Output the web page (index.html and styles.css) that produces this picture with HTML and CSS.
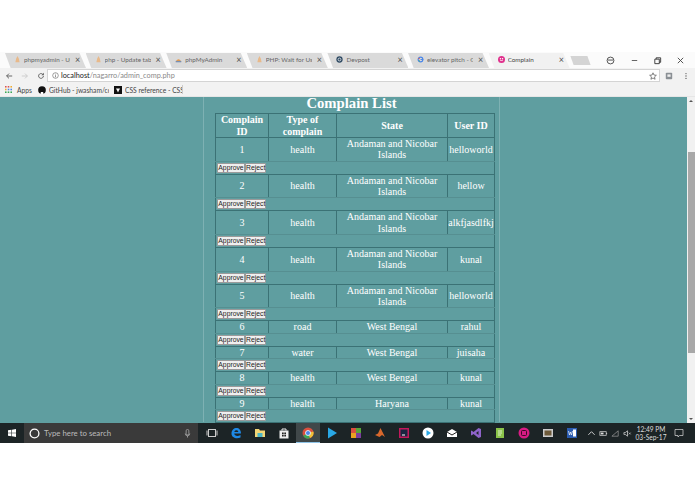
FILE: index.html
```html
<!DOCTYPE html>
<html lang="en">
<head>
<meta charset="utf-8">
<title>Complain</title>
<link rel="stylesheet" href="styles.css">
</head>
<body>
<div class="screen">
  <div class="tabstrip">
    <div class="tab"><svg class="fav" viewBox="0 0 10 10"><path d="M5 0l2 4 1 5H2l1-5z" fill="#e8b98a"/></svg><span class="tabtext">phpmyadmin - Up</span><span class="x">×</span></div>
    <div class="tab"><svg class="fav" viewBox="0 0 10 10"><path d="M5 0l2 4 1 5H2l1-5z" fill="#e8b98a"/></svg><span class="tabtext">php - Update tabl</span><span class="x">×</span></div>
    <div class="tab"><svg class="fav" viewBox="0 0 10 10"><path d="M1 8q4-7 8 0z" fill="#e89a4a"/><rect x="1" y="7" width="8" height="2" fill="#7a8fb0"/></svg><span class="tabtext">phpMyAdmin</span><span class="x">×</span></div>
    <div class="tab"><svg class="fav" viewBox="0 0 10 10"><path d="M5 0l2 4 1 5H2l1-5z" fill="#e8b98a"/></svg><span class="tabtext">PHP: Wait for User</span><span class="x">×</span></div>
    <div class="tab"><svg class="fav" viewBox="0 0 10 10"><circle cx="5" cy="5" r="4.5" fill="#2f4a63"/><circle cx="5" cy="5" r="2" fill="none" stroke="#fff"/></svg><span class="tabtext">Devpost</span><span class="x">×</span></div>
    <div class="tab"><svg class="fav" viewBox="0 0 10 10"><circle cx="5" cy="5" r="3.4" fill="none" stroke="#4a86e8" stroke-width="1.6"/><path d="M5 5h4" stroke="#4a86e8" stroke-width="1.4"/><path d="M2 3l2 1" stroke="#e0483a" stroke-width="1.4"/><path d="M2.500 7.500l1.500-1" stroke="#3aa757" stroke-width="1.4"/></svg><span class="tabtext">elevator pitch - G</span><span class="x">×</span></div>
    <div class="tab active"><svg class="fav" viewBox="0 0 10 10"><circle cx="5" cy="5" r="5" fill="#e0308c"/><circle cx="3.500" cy="4" r="1" fill="#fff"/><circle cx="6.500" cy="4" r="1" fill="#fff"/><path d="M3 6.500h4" stroke="#fff"/></svg><span class="tabtext">Complain</span><span class="x">×</span></div>
    <div class="newtab"></div>
    <div class="winbtns">
      <svg class="winicon profile" viewBox="0 0 10 10"><circle cx="5" cy="5" r="3.800" fill="none" stroke="#444"/><path d="M2 4.500h6" stroke="#444"/></svg>
      <svg class="winicon" viewBox="0 0 10 10"><path d="M2 5h6" stroke="#555"/></svg>
      <svg class="winicon" viewBox="0 0 10 10"><path d="M2 3.500h5v5H2zM3.500 3.500V2h5v5H7" fill="none" stroke="#333"/></svg>
      <svg class="winicon" viewBox="0 0 10 10"><path d="M2 2l6 6M8 2l-6 6" stroke="#444"/></svg>
    </div>
  </div>

  <div class="toolbar">
    <svg class="tool" viewBox="0 0 10 10"><path d="M9 5H2M5 2L2 5l3 3" fill="none" stroke="#555" stroke-width="1.100"/></svg>
    <svg class="tool" viewBox="0 0 10 10"><path d="M1 5h7M5 2l3 3-3 3" fill="none" stroke="#c8c8c8" stroke-width="1.100"/></svg>
    <svg class="tool" viewBox="0 0 10 10"><path d="M8 5a3 3 0 1 1-1-2.300" fill="none" stroke="#555" stroke-width="1.100"/><path d="M8.500 1v3h-3z" fill="#555"/></svg>
    <div class="omnibox">
      <svg class="info" viewBox="0 0 10 10"><circle cx="5" cy="5" r="4" fill="none" stroke="#555" stroke-width=".8"/><path d="M5 4.500v3M5 2.500v1" stroke="#555" stroke-width=".9"/></svg>
      <span class="host">localhost</span><span class="path">/nagarro/admin_comp.php</span>
      <svg class="star" viewBox="0 0 10 10"><path d="M5 1l1.200 2.800 3 .3-2.300 2 .7 3L5 7.500 2.400 9.100l.7-3-2.300-2 3-.3z" fill="none" stroke="#444" stroke-width=".8"/></svg>
    </div>
    <svg class="ext" viewBox="0 0 10 10"><rect x="1" y="1" width="8" height="8" rx="1" fill="#8a8f94"/><rect x="3" y="3" width="4" height="3" fill="#eee"/></svg>
    <svg class="menu" viewBox="0 0 10 10"><circle cx="5" cy="2" r=".8" fill="#555"/><circle cx="5" cy="5" r=".8" fill="#555"/><circle cx="5" cy="8" r=".8" fill="#555"/></svg>
  </div>

  <div class="bookmarks">
    <svg class="appsgrid" viewBox="0 0 9 9"><g fill="#d9534f"><rect width="2" height="2"/><rect x="3.500" width="2" height="2"/></g><g fill="#f0ad2e"><rect x="7" width="2" height="2"/><rect y="3.500" width="2" height="2"/></g><g fill="#4a86e8"><rect x="3.500" y="3.500" width="2" height="2"/><rect x="7" y="3.500" width="2" height="2"/></g><g fill="#3aa757"><rect y="7" width="2" height="2"/><rect x="3.500" y="7" width="2" height="2"/><rect x="7" y="7" width="2" height="2"/></g></svg>
    <span class="bm apps">Apps</span>
    <svg class="bmicon" viewBox="0 0 10 10"><circle cx="5" cy="5" r="4.800" fill="#111"/><path d="M3.500 10V7.500h3V10z" fill="#fff"/></svg>
    <span class="bm github">GitHub - jwasham/cc</span>
    <svg class="bmicon" viewBox="0 0 10 10"><rect width="10" height="10" fill="#111"/><path d="M2.500 3h5L6 6 5 8 4 6z" fill="#fff"/></svg>
    <span class="bm css">CSS reference - CSS</span>
    <span class="bmsep"></span>
  </div>

  <div class="page">
    <main class="viewport">
      <div class="content">
        <h1 class="title">Complain List</h1>
        <table class="list">
          <colgroup><col class="c1"><col class="c2"><col class="c3"><col class="c4"></colgroup>
          <thead>
            <tr class="head"><th>Complain ID</th><th>Type of complain</th><th>State</th><th>User ID</th></tr>
          </thead>
          <tbody>
            <tr class="tall"><td>1</td><td>health</td><td>Andaman and Nicobar Islands</td><td>helloworld</td></tr>
            <tr class="act"><td colspan="4"><button>Approve</button><button>Reject</button></td></tr>
            <tr class="tall"><td>2</td><td>health</td><td>Andaman and Nicobar Islands</td><td>hellow</td></tr>
            <tr class="act"><td colspan="4"><button>Approve</button><button>Reject</button></td></tr>
            <tr class="tall"><td>3</td><td>health</td><td>Andaman and Nicobar Islands</td><td>alkfjasdlfkj</td></tr>
            <tr class="act"><td colspan="4"><button>Approve</button><button>Reject</button></td></tr>
            <tr class="tall"><td>4</td><td>health</td><td>Andaman and Nicobar Islands</td><td>kunal</td></tr>
            <tr class="act"><td colspan="4"><button>Approve</button><button>Reject</button></td></tr>
            <tr class="tall"><td>5</td><td>health</td><td>Andaman and Nicobar Islands</td><td>helloworld</td></tr>
            <tr class="act"><td colspan="4"><button>Approve</button><button>Reject</button></td></tr>
            <tr class="short"><td>6</td><td>road</td><td>West Bengal</td><td>rahul</td></tr>
            <tr class="act"><td colspan="4"><button>Approve</button><button>Reject</button></td></tr>
            <tr class="short"><td>7</td><td>water</td><td>West Bengal</td><td>juisaha</td></tr>
            <tr class="act"><td colspan="4"><button>Approve</button><button>Reject</button></td></tr>
            <tr class="short"><td>8</td><td>health</td><td>West Bengal</td><td>kunal</td></tr>
            <tr class="act"><td colspan="4"><button>Approve</button><button>Reject</button></td></tr>
            <tr class="short"><td>9</td><td>health</td><td>Haryana</td><td>kunal</td></tr>
            <tr class="act"><td colspan="4"><button>Approve</button><button>Reject</button></td></tr>
          </tbody>
        </table>
      </div>
    </main>
    <div class="scrollbar">
      <svg class="arrow" viewBox="0 0 8 8"><path d="M2 5l2-2 2 2z" fill="#555"/></svg>
      <div class="track"><div class="thumb"></div></div>
      <svg class="arrow" viewBox="0 0 8 8"><path d="M2 3l2 2 2-2z" fill="#555"/></svg>
    </div>
  </div>

  <div class="taskbar">
    <svg class="winlogo" viewBox="0 0 10 10"><path d="M0 1.500l4.300-.6v3.800H0zM5 .8L10 0v4.700H5zM0 5.300h4.300v3.800L0 8.500zM5 5.300h5V10l-5-.8z" fill="#fff"/></svg>
    <div class="search">
      <svg class="cortana" viewBox="0 0 12 12"><circle cx="6" cy="6" r="4.800" fill="none" stroke="#fff" stroke-width="1.400"/></svg>
      <span class="searchtext">Type here to search</span>
      <svg class="mic" viewBox="0 0 10 10"><rect x="3.500" y=".5" width="3" height="6" rx="1.500" fill="none" stroke="#aaa" stroke-width=".9"/><path d="M2.500 5a2.500 2.500 0 0 0 5 0M5 7.500v2" fill="none" stroke="#aaa" stroke-width=".9"/></svg>
    </div>
    <div class="apps-row">
      <span class="slot"><svg viewBox="0 0 12 12"><rect x="2.500" y="2.500" width="7" height="7" fill="none" stroke="#ccc"/><path d="M1 3.500v5M11 3.500v5" stroke="#ccc"/></svg></span>
      <span class="slot"><svg viewBox="0 0 12 12"><path d="M1.500 6.500C1.500 3 4 1 6.500 1s4.500 2 4.500 5.500H4.200c.2 2.800 4 3 6.300 1.500v2.500c-3.500 1.700-9 .6-9-4z" fill="#1e88e5"/><path d="M4.300 5h4c0-2.300-3.600-2.300-4 0z" fill="#1c2426"/></svg></span>
      <span class="slot"><svg viewBox="0 0 12 12"><path d="M1 2h4l1 1.500h5V10H1z" fill="#f3d675"/><rect x="3.500" y="6" width="5" height="4" fill="#4db6c6"/></svg></span>
      <span class="slot"><svg viewBox="0 0 12 12"><rect x="1.500" y="3.500" width="9" height="8" fill="#eee"/><path d="M4 3.500V2h4v1.500" fill="none" stroke="#eee"/><rect x="4" y="5.500" width="1.700" height="1.700" fill="#222"/><rect x="6.300" y="5.500" width="1.700" height="1.700" fill="#222"/><rect x="4" y="7.800" width="1.700" height="1.700" fill="#222"/><rect x="6.300" y="7.800" width="1.700" height="1.700" fill="#222"/></svg></span>
      <span class="slot on"><svg viewBox="0 0 12 12"><circle cx="6" cy="6" r="5.500" fill="#d9503f"/><path d="M6 6L1.200 8.800A5.500 5.500 0 0 0 8 11.100z" fill="#3aa757"/><path d="M6 6l2 5.100A5.500 5.500 0 0 0 11.400 4.500z" fill="#f2c037"/><circle cx="6" cy="6" r="2.500" fill="#4a86e8" stroke="#fff" stroke-width=".8"/></svg></span>
      <span class="slot"><svg viewBox="0 0 12 12"><path d="M2 .5L11 6l-9 5.500z" fill="#29a8e6"/></svg></span>
      <span class="slot"><svg viewBox="0 0 12 12"><rect x="1" y="1" width="5" height="5" fill="#d9503f"/><rect x="6" y="1" width="5" height="5" fill="#57a639"/><rect x="1" y="6" width="5" height="5" fill="#e8a320"/><rect x="6" y="6" width="5" height="5" fill="#7a3f9d"/></svg></span>
      <span class="slot"><svg viewBox="0 0 12 12"><path d="M1 8l3-1.500L6.500 1 11 10 8 8 5.500 10z" fill="#d9682c"/></svg></span>
      <span class="slot"><svg viewBox="0 0 12 12"><rect x="1" y="1" width="10" height="10" fill="#c2185b"/><rect x="2.500" y="2.500" width="7" height="7" fill="#1a2540"/><path d="M4 8h3" stroke="#fff"/></svg></span>
      <span class="slot"><svg viewBox="0 0 12 12"><circle cx="6" cy="6" r="5.500" fill="#fff"/><path d="M4.500 3L9 6l-4.500 3z" fill="#29a8e6"/></svg></span>
      <span class="slot"><svg viewBox="0 0 12 12"><path d="M1 5l5-3 5 3v5H1z" fill="#fff"/><path d="M1 5l5 3 5-3" fill="none" stroke="#222"/></svg></span>
      <span class="slot"><svg viewBox="0 0 12 12"><path d="M8.500 1L11 2v8l-2.500 1L3.500 7 1.500 8.500 1 8V4l.5-.5L3.500 5z" fill="#8e63c9"/><path d="M8.500 4v4L6 6z" fill="#1c2426"/></svg></span>
      <span class="slot"><svg viewBox="0 0 12 12"><rect x="2" y="1" width="8" height="10" fill="#8bc34a"/><path d="M4 4h4M4 6h4M4 8h3" stroke="#fff" stroke-width=".7"/></svg></span>
      <span class="slot"><svg viewBox="0 0 12 12"><circle cx="6" cy="6" r="5.500" fill="#d81b84"/><rect x="3.500" y="3.500" width="5" height="5" rx="1" fill="none" stroke="#3a0b26"/></svg></span>
      <span class="slot"><svg viewBox="0 0 12 12"><rect x="1" y="2" width="10" height="8" fill="#ccc"/><rect x="2.500" y="3.500" width="7" height="5" fill="#6d5a3a"/></svg></span>
      <span class="slot"><svg viewBox="0 0 12 12"><rect x="1" y="1" width="10" height="10" fill="#2b5cb0"/><rect x="7" y="2.500" width="3" height="7" fill="#fff"/><path d="M2.500 4l1 4 1-3 1 3 1-4" fill="none" stroke="#fff" stroke-width=".7"/></svg></span>
    </div>
    <div class="tray">
      <svg viewBox="0 0 10 10"><path d="M1.500 6.500L5 3l3.500 3.500" fill="none" stroke="#ddd"/></svg>
      <svg viewBox="0 0 10 10"><rect x="1" y="3" width="7" height="4" fill="none" stroke="#ddd" stroke-width=".8"/><rect x="2" y="4" width="3" height="2" fill="#ddd"/><path d="M8.500 4.500v1" stroke="#ddd"/></svg>
      <svg viewBox="0 0 10 10"><path d="M1 8L8 2v6z" fill="none" stroke="#999" stroke-width=".8"/></svg>
      <svg viewBox="0 0 10 10"><path d="M1 4h1.500L5 2v6L2.500 6H1z" fill="none" stroke="#ddd" stroke-width=".8"/><path d="M6.500 4l2 2M8.500 4l-2 2" stroke="#ddd" stroke-width=".7"/></svg>
    </div>
    <div class="clock"><span>12:49 PM</span><span>03-Sep-17</span></div>
    <svg class="notif" viewBox="0 0 10 10"><path d="M1 1.500h8v6H5.500L4 9V7.500H1z" fill="none" stroke="#ddd" stroke-width=".7"/></svg>
  </div>
</div>
</body>
</html>
```
FILE: styles.css
```css
* { box-sizing: border-box; }
html, body { margin: 0; padding: 0; background: #fff; }
body { overflow: hidden; }
.screen {
  width: 695px;
  height: 494px;
  padding: 52px 0 51px;
  display: flex;
  flex-direction: column;
  font-family: Lato, "Liberation Sans", sans-serif;
}

/* tab strip */
.tabstrip { height: 16px; display: flex; align-items: flex-end; padding-left: 5px; background: #fbfbfb; flex: none; }
.tab {
  width: 81px;
  height: 15px;
  margin-right: -.4px;
  padding: 0 5px 2px 9px;
  display: flex;
  align-items: center;
  gap: 3px;
  background: #dadada;
  clip-path: polygon(0 0, 92% 0, 100% 100%, 7% 100%);
  color: #666;
  font-size: 6.300px;
  overflow: hidden;
  white-space: nowrap;
}
.tab.active { background: #f1f1f1; color: #444; }
.fav { width: 7px; height: 7px; flex: none; }
.tabtext { width: 46px; flex: none; overflow: hidden; }
.x { margin-left: auto; flex: none; width: 6px; font-size: 9px; color: #555; line-height: 1; }
.newtab { width: 17px; height: 9px; margin: 0 0 3px 3px; background: #d4d4d4; transform: skewX(20deg); flex: none; }
.winbtns { margin-left: 17px; display: flex; align-items: center; gap: 14px; align-self: center; }
.winicon { width: 9px; height: 9px; }
.winicon.profile { margin-right: 1px; }

/* toolbar */
.toolbar { height: 15px; background: #f2f2f2; display: flex; align-items: center; padding-left: 5px; flex: none; }
.tool { width: 8px; height: 8px; margin-right: 8px; flex: none; }
.omnibox {
  width: 613px;
  height: 13px;
  margin-left: -6px;
  background: #fff;
  border: 1px solid #d4d4d4;
  display: flex;
  align-items: center;
  padding: 0 2px 0 4px;
  font-size: 7.300px;
  flex: none;
}
.info { width: 7px; height: 7px; margin-right: 2px; }
.host { color: #222; }
.path { color: #8a8a8a; flex: 1; }
.star { width: 8px; height: 8px; }
.ext { width: 8px; height: 8px; margin-left: 5px; flex: none; }
.menu { width: 8px; height: 8px; margin-left: 9px; flex: none; }

/* bookmarks */
.bookmarks { height: 14px; background: #f2f2f2; display: flex; align-items: center; padding-left: 5px; font-size: 6.700px; color: #444; flex: none; border-bottom: 1px solid #e6e6e6; }
.appsgrid { width: 7px; height: 7px; margin-right: 5px; flex: none; }
.bm { white-space: nowrap; }
.apps { width: 16px; }
.bmicon { width: 8px; height: 8px; margin: 0 3px 0 5px; flex: none; }
.github { width: 60px; overflow: hidden; }
.css { width: 57px; overflow: hidden; }
.bmsep { width: 1px; height: 9px; background: #ccc; }

/* page */
.page { flex: 1; display: flex; min-height: 0; background: #5f9ea0; }
.viewport { flex: 1; overflow: hidden; padding-left: 203px; }
.content {
  width: 297px;
  height: 100%;
  border-left: 1px solid #7eb1b3;
  border-right: 1px solid #7eb1b3;
  padding-left: 11px;
  color: #fff;
  font-family: "Liberation Serif", serif;
}
.title { margin: -1px 0 0 -11px; height: 17px; width: 295px; text-align: center; font-size: 14.700px; line-height: 15px; font-weight: bold; }
.list { width: 279px; table-layout: fixed; border-collapse: collapse; border: 1px solid #3b7275; font-size: 10px; line-height: 11.300px; }
.c1 { width: 53px; }
.c2 { width: 68px; }
.c3 { width: 111px; }
.c4 { width: 47px; }
.list th, .list td { padding: 0; text-align: center; font-weight: normal; vertical-align: middle; border-left: 1px solid #3b7275; }
.list th { font-weight: bold; border-bottom: 1px solid #3b7275; }
.head { height: 24px; }
.tall { height: 23.600px; }
.short { height: 12.300px; }
.tall td, .short td { border-top: 1px solid #3b7275; border-bottom: 1px solid #568f91; }
.act { height: 13.100px; }
.list .act td { text-align: left; padding-left: 1px; line-height: 0; border-left: 0; }
.list button {
  height: 10px;
  padding: 0;
  margin: 0;
  font-family: "Liberation Sans", sans-serif;
  font-size: 6.800px;
  line-height: 8px;
  color: #222;
  background: #efefef;
  border: 1px solid #9a9a9a;
  border-radius: 1px;
  vertical-align: middle;
}
.list button:first-child { width: 28px; }
.list button:last-child { width: 21px; }

/* scrollbar */
.scrollbar { width: 8px; background: #f1f1f1; display: flex; flex-direction: column; flex: none; }
.arrow { width: 8px; height: 8px; flex: none; }
.track { flex: 1; padding-top: 47px; }
.thumb { height: 201px; background: #a8a8a8; margin: 0 .5px; }

/* taskbar */
.taskbar { height: 20px; background: #1c2426; display: flex; align-items: center; color: #ddd; flex: none; }
.winlogo { width: 8px; height: 8px; margin: 0 8px; flex: none; }
.search { width: 174px; height: 20px; background: #3a3a3a; display: flex; align-items: center; padding: 0 6px 0 5px; flex: none; }
.cortana { width: 11px; height: 11px; margin-right: 4px; flex: none; }
.searchtext { flex: 1; font-size: 7.800px; color: #bbb; }
.mic { width: 9px; height: 9px; }
.apps-row { display: flex; margin-left: 2px; flex: none; }
.slot { width: 24px; height: 20px; display: flex; align-items: center; justify-content: center; }
.slot svg { width: 12px; height: 12px; }
.slot.on { background: #40484a; border-bottom: 1px solid #8fc4e8; }
.tray { display: flex; align-items: center; gap: 3px; margin-left: 3px; flex: none; }
.tray svg { width: 9px; height: 9px; }
.clock { width: 34px; margin-left: 2px; display: flex; flex-direction: column; align-items: center; font-size: 6.600px; line-height: 8.500px; color: #ddd; white-space: nowrap; flex: none; }
.notif { width: 10px; height: 10px; margin-left: 6px; flex: none; }
```
